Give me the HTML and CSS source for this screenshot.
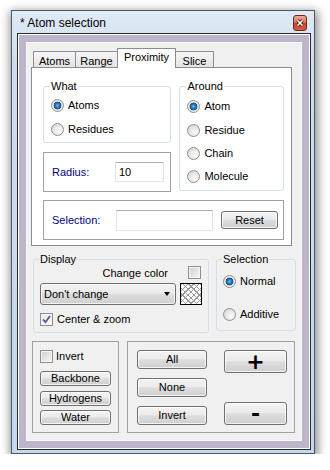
FILE: index.html
```html
<!DOCTYPE html>
<html lang="en">
<head>
  <meta charset="UTF-8" />
  <title>Atom selection</title>
  <link rel="stylesheet" href="styles.css">
</head>
<body>
  <div class="window">
    <div class="titlebar">
      <span class="title">* Atom selection</span>
      <span class="close">
        <svg width="8" height="8" viewBox="0 0 8 8">
          <path d="M1.5 1.5 L6.5 6.5 M6.5 1.5 L1.5 6.5" stroke="#5a1a10" stroke-width="3.2" />
          <path d="M1.5 1.5 L6.5 6.5 M6.5 1.5 L1.5 6.5" stroke="#fff" stroke-width="1.6" />
        </svg>
      </span>
    </div>

    <div class="client">
      <!-- tab widget -->
      <div class="tabs">
        <div class="tabbar">
          <div class="tab t-atoms">Atoms</div>
          <div class="tab t-range">Range</div>
          <div class="tab sel t-prox">Proximity</div>
          <div class="tab t-slice">Slice</div>
        </div>
        <div class="pane">
          <div class="pane-top">
            <div class="col">
              <fieldset class="group what">
                <legend>What</legend>
                <div class="opt first"><span class="radio on"></span>Atoms</div>
                <div class="opt"><span class="radio"></span>Residues</div>
              </fieldset>
              <div class="frame radius">
                <span class="lbl">Radius:</span>
                <span class="input">10</span>
              </div>
            </div>
            <fieldset class="group around">
              <legend>Around</legend>
              <div class="opt first"><span class="radio on"></span>Atom</div>
              <div class="opt"><span class="radio"></span>Residue</div>
              <div class="opt tight"><span class="radio"></span>Chain</div>
              <div class="opt tight"><span class="radio"></span>Molecule</div>
            </fieldset>
          </div>
          <div class="frame selection">
            <span class="lbl">Selection:</span>
            <span class="input wide"></span>
            <span class="btn reset">Reset</span>
          </div>
        </div>
      </div>

      <!-- display / selection mode -->
      <div class="mid">
        <fieldset class="group display">
          <legend>Display</legend>
          <div class="cc-row">
            <span>Change color</span>
            <span class="check"></span>
          </div>
          <div class="combo-row">
            <span class="combo">Don't change<span class="arrow"></span></span>
            <span class="swatch"></span>
          </div>
          <div class="opt zoom">
            <span class="check on">
              <svg width="11" height="11" viewBox="0 0 11 11"><path d="M2 5.5 L4.5 8.2 L9 2" fill="none" stroke="#4a5b8c" stroke-width="1.8" /></svg>
            </span>Center &amp; zoom
          </div>
        </fieldset>
        <fieldset class="group mode">
          <legend>Selection</legend>
          <div class="opt first"><span class="radio on"></span>Normal</div>
          <div class="opt second"><span class="radio"></span>Additive</div>
        </fieldset>
      </div>

      <!-- quick buttons -->
      <div class="bottom">
        <div class="frame presets">
          <div class="opt"><span class="check"></span>Invert</div>
          <span class="btn small b1">Backbone</span>
          <span class="btn small">Hydrogens</span>
          <span class="btn small b3">Water</span>
        </div>
        <div class="frame actions">
          <div class="acol">
            <span class="btn mid-btn">All</span>
            <span class="btn mid-btn">None</span>
            <span class="btn mid-btn">Invert</span>
          </div>
          <div class="acol pm">
            <span class="btn big">+</span>
            <span class="btn big">-</span>
          </div>
        </div>
      </div>
    </div>
  </div>
</body>
</html>
```

FILE: styles.css
```css
body {
  margin: 0;
  background: #fff;
  font-family: "Liberation Sans", Arial, sans-serif;
  font-size: 11px;
  color: #000;
}

.window {
  margin: 10px 0 0 11px;
  width: 304px;
  height: 444px;
  box-sizing: border-box;
  border: 1px solid #4d5866;
  background: linear-gradient(#e1eaf6, #cadcf0 60px, #c3d7ee);
  padding: 0 3px 3px 5px;
  box-shadow: 1px 3px 9px 2px rgba(0, 0, 0, 0.45);
}

.titlebar {
  height: 22px;
  box-sizing: border-box;
  margin: 0 -3px 0 -5px;
  padding: 1px 7px 0 8px;
  display: flex;
  align-items: center;
  justify-content: space-between;
  font-size: 12px;
}

.close {
  width: 14px;
  height: 16px;
  box-sizing: border-box;
  border: 1px solid #6d2a1f;
  border-radius: 3px;
  background: linear-gradient(#eaa899, #d8765f 45%, #c7452c 52%, #d35b40);
  display: flex;
  align-items: center;
  justify-content: center;
}

.client {
  width: 294px;
  height: 417px;
  box-sizing: border-box;
  border: 1px solid #2b2b2b;
  background: #f0f0f0;
  padding: 9px;
  box-shadow: inset 0 0 0 1px #fff, inset 0 0 0 8px #bdb6ca, inset 0 0 0 9px #fafafa;
}

/* tabs */
.tabs {
  margin: 5px 0 0 4px;
  width: 261px;
}
.tabbar {
  display: flex;
  align-items: flex-end;
  height: 19px;
  padding-left: 2px;
}
.tab {
  position: relative;
  box-sizing: border-box;
  height: 16px;
  border: 1px solid #898c95;
  border-bottom: none;
  background: linear-gradient(#f6f6f6, #e3e3e3);
  text-align: center;
  line-height: 16px;
  padding-top: 1px;
  margin-right: -1px;
}
.tab.sel {
  height: 20px;
  margin-bottom: -1px;
  padding-top: 0;
  background: #fff;
  z-index: 2;
}
.t-atoms { width: 43px; }
.t-range { width: 43px; }
.t-prox { width: 59px; }
.t-slice { width: 39px; }

.pane {
  position: relative;
  z-index: 1;
  height: 179px;
  box-sizing: border-box;
  border: 1px solid #898c95;
  background: #fff;
  padding: 12px 7px 0 11px;
}
.pane-top {
  display: flex;
  gap: 8px;
}
.col {
  width: 129px;
  display: flex;
  flex-direction: column;
  gap: 9px;
}

/* group boxes */
.group {
  margin: 0;
  min-width: 0;
  box-sizing: border-box;
  border: 1px solid #d5dfe5;
  border-radius: 3px;
  padding: 0 5px 0 7px;
}
.group legend {
  padding: 0 1px;
  margin-left: -1px;
  line-height: 13px;
}
.what { height: 63px; }
.around { width: 105px; height: 111px; }

.opt {
  display: flex;
  align-items: center;
  gap: 4px;
  height: 13px;
  line-height: 13px;
  margin-top: 11px;
}
.what .opt.first { margin-top: 6px; }
.around .opt.first { margin-top: 7px; }
.around .opt.tight { margin-top: 10px; }

.radio {
  position: relative;
  width: 13px;
  height: 13px;
  box-sizing: border-box;
  border: 1px solid #8e8f8f;
  border-radius: 50%;
  background: radial-gradient(circle at 65% 65%, #fdfdfd 0, #e4e4e4 55%, #cdcdcd 100%);
  flex: none;
}
.radio.on {
  background: radial-gradient(circle at 50% 50%, #6cc3f2 0, #2b86cf 1.6px, #1a5f9f 3px, #2a4f78 3.6px, #e6e6e6 4.2px, #f6f6f6 100%);
}

.check {
  width: 13px;
  height: 13px;
  box-sizing: border-box;
  border: 1px solid #8e8f8f;
  background: linear-gradient(135deg, #d0d0d0, #f7f7f7);
  box-shadow: inset 0 0 0 1px #f4f4f4;
  flex: none;
  display: flex;
  align-items: center;
  justify-content: center;
}
.check.on {
  background: linear-gradient(135deg, #e8e8e8, #fbfbfb);
}

/* frames */
.frame {
  box-sizing: border-box;
  border: 1px solid #a0a0a0;
}
.radius,
.selection {
  height: 40px;
  display: flex;
  align-items: center;
  padding-left: 8px;
}
.lbl {
  color: #000080;
  width: 63px;
  flex: none;
}
.selection {
  width: 241px;
  margin-top: 8px;
}
.selection .lbl { width: 64px; }

.input {
  box-sizing: border-box;
  width: 49px;
  height: 20px;
  border: 1px solid;
  border-color: #abadb3 #dbdfe6 #e3e9ef #e2e3ea;
  background: #fff;
  padding-left: 3px;
  line-height: 18px;
}
.input.wide {
  width: 97px;
  height: 21px;
}

.btn {
  box-sizing: border-box;
  border: 1px solid #707070;
  border-radius: 3px;
  background: linear-gradient(#f3f3f3, #ebebeb 45%, #dddddd 52%, #cfcfcf);
  box-shadow: inset 0 0 0 1px rgba(255, 255, 255, 0.75);
  display: flex;
  align-items: center;
  justify-content: center;
  line-height: 13px;
}
.reset {
  width: 57px;
  height: 18px;
  margin-left: 8px;
}

/* display row */
.mid {
  display: flex;
  align-items: flex-start;
  gap: 7px;
  margin: 7px 0 0 6px;
}
.display {
  width: 176px;
  height: 80px;
  padding: 0 5px 0 6px;
}
.cc-row {
  display: flex;
  justify-content: flex-end;
  align-items: center;
  gap: 20px;
  height: 13px;
  padding-right: 2px;
}
.combo-row {
  display: flex;
  gap: 4px;
  margin-top: 4px;
}
.combo {
  box-sizing: border-box;
  width: 136px;
  height: 22px;
  border: 1px solid #707070;
  border-radius: 3px;
  background: linear-gradient(#f3f3f3, #ebebeb 45%, #dddddd 52%, #cfcfcf);
  box-shadow: inset 0 0 0 1px rgba(255, 255, 255, 0.75);
  display: flex;
  align-items: center;
  justify-content: space-between;
  padding: 0 5px 0 3px;
}
.arrow {
  width: 0;
  height: 0;
  border-left: 3.5px solid transparent;
  border-right: 3.5px solid transparent;
  border-top: 4px solid #000;
}
.swatch {
  width: 22px;
  height: 22px;
  box-sizing: border-box;
  border: 1px solid #000;
  background:
    repeating-linear-gradient(45deg, transparent 0 3px, #9a9a9a 3px 4px),
    repeating-linear-gradient(-45deg, transparent 0 3px, #9a9a9a 3px 4px),
    #fff;
}
.display .opt.zoom { margin-top: 8px; }

.mode {
  width: 80px;
  height: 78px;
  padding: 0 5px 0 6px;
}
.mode .opt.first { margin-top: 9px; }
.mode .opt.second { margin-top: 20px; }

/* bottom row */
.bottom {
  display: flex;
  gap: 8px;
  margin: 8px 0 0 5px;
}
.presets {
  width: 87px;
  height: 92px;
  padding: 8px 0 0 7px;
}
.presets .opt {
  margin-top: 0;
  gap: 3px;
}
.btn.small {
  width: 71px;
  height: 15px;
  margin-top: 5px;
}
.btn.small.b1 { margin-top: 8px; }
.btn.small.b3 { margin-top: 4px; }

.actions {
  width: 168px;
  height: 92px;
  padding: 8px 0 0 9px;
  display: flex;
  gap: 17px;
}
.acol {
  display: flex;
  flex-direction: column;
  gap: 9px;
}
.btn.mid-btn {
  width: 70px;
  height: 19px;
}
.acol.pm {
  height: 75px;
  justify-content: space-between;
}
.btn.big {
  width: 63px;
  height: 23px;
  font-family: "DejaVu Sans", sans-serif;
  font-weight: bold;
  font-size: 22px;
  line-height: 20px;
}
```
